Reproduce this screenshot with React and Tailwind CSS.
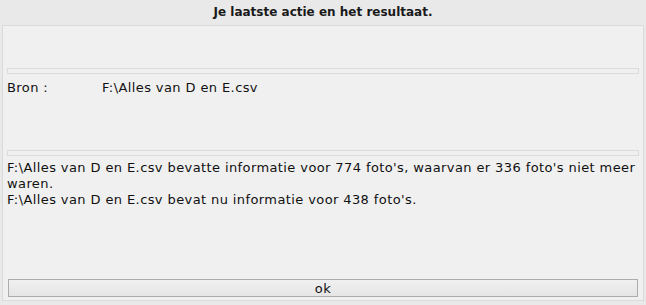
import React from "react";

const RESULT_LINES = [
  "F:\\Alles van D en E.csv bevatte informatie voor 774 foto's, waarvan er 336 foto's niet meer waren.",
  "F:\\Alles van D en E.csv bevat nu informatie voor 438 foto's.",
];

function Divider() {
  return <div className="h-[6px] border border-[#dcdcdc] bg-[#f0f0f0]" />;
}

export default function App() {
  return (
    <div className="w-[646px] h-[305px] bg-[#e9e9e9] flex flex-col text-[#111] font-['DejaVu_Sans',sans-serif] text-[13px] leading-[16px] tracking-[0.4px]">
      {/* Title */}
      <div className="h-[25px] flex items-center justify-center font-bold text-[12px] tracking-normal text-[#1a1a1a] pb-[1px]">
        Je laatste actie en het resultaat.
      </div>

      {/* Panel */}
      <div className="mx-[2px] h-[276px] border border-[#dadada] bg-[#f0f0f0] px-[4px] flex flex-col">
        <div className="h-[42px]" />
        <Divider />

        <div className="mt-[6px] flex">
          <span className="w-[95px]">Bron :</span>
          <span>F:\Alles van D en E.csv</span>
        </div>

        <div className="h-[54px]" />
        <Divider />

        <div className="mt-[4px]">
          {RESULT_LINES.map((line, i) => (
            <p key={i}>{line}</p>
          ))}
        </div>

        <div className="flex-1" />

        <button className="mb-[3px] mx-[1px] h-[18px] border border-[#acacac] bg-gradient-to-b from-[#f0f0f0] to-[#e5e5e5] flex items-center justify-center text-[13px] leading-none">
          ok
        </button>
      </div>
    </div>
  );
}
